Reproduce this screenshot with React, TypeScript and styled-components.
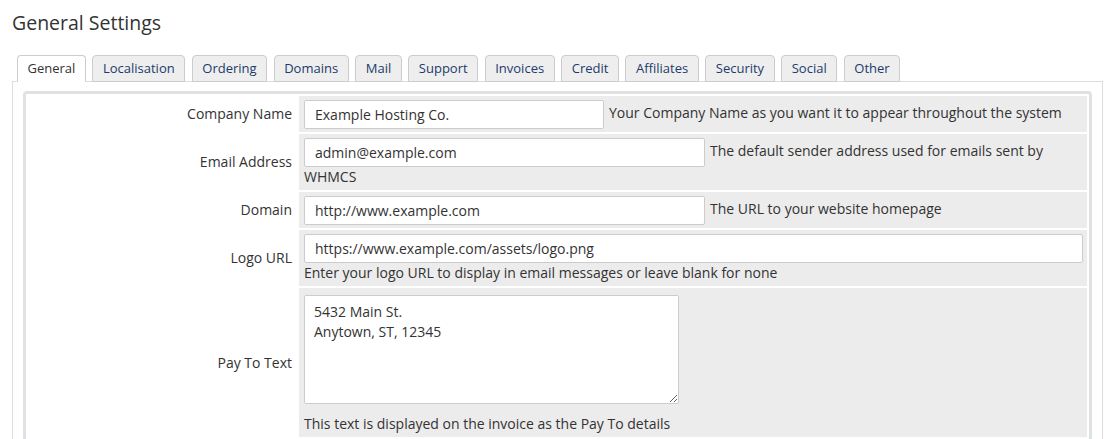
import React from "react";
import styled, { createGlobalStyle } from "styled-components";

type Field = {
  label: string;
  value: string;
  width?: number;
  help: string;
  kind?: "inline" | "block" | "textarea";
};

const tabs = [
  "General",
  "Localisation",
  "Ordering",
  "Domains",
  "Mail",
  "Support",
  "Invoices",
  "Credit",
  "Affiliates",
  "Security",
  "Social",
  "Other",
];

const fields: Field[] = [
  {
    label: "Company Name",
    value: "Example Hosting Co.",
    width: 300,
    help: "Your Company Name as you want it to appear throughout the system",
  },
  {
    label: "Email Address",
    value: "admin@example.com",
    width: 401,
    help: "The default sender address used for emails sent by WHMCS",
  },
  {
    label: "Domain",
    value: "http://www.example.com",
    width: 401,
    help: "The URL to your website homepage",
  },
  {
    label: "Logo URL",
    value: "https://www.example.com/assets/logo.png",
    help: "Enter your logo URL to display in email messages or leave blank for none",
    kind: "block",
  },
  {
    label: "Pay To Text",
    value: "5432 Main St.\nAnytown, ST, 12345",
    help: "This text is displayed on the invoice as the Pay To details",
    kind: "textarea",
  },
];

// #region Styled components

const GlobalStyle = createGlobalStyle`
  * { box-sizing: border-box; }
  body {
    margin: 0;
    background: #fff;
    color: #333;
    font-family: "Open Sans", "Liberation Sans", sans-serif;
  }
`;

const Page = styled.div`
  padding: 0 14px 0 12px;
`;

const Title = styled.h1`
  margin: 0 0 20px;
  padding-top: 11px;
  font-size: 19.5px;
  font-weight: 400;
  line-height: 24px;
  color: #333;
`;

const TabList = styled.div`
  display: flex;
  gap: 6.6px;
  padding-left: 5px;
`;

const Tab = styled.div<{ $active?: boolean }>`
  position: relative;
  z-index: 1;
  margin-bottom: -1px;
  padding: 3px 9.5px;
  font-size: 13px;
  line-height: 19px;
  border: 1px solid #ccc;
  border-bottom-color: ${(p) => (p.$active ? "#fff" : "#ccc")};
  border-radius: 4px 4px 0 0;
  background: ${(p) => (p.$active ? "#fff" : "#eee")};
  color: ${(p) => (p.$active ? "#333" : "#1d3a6c")};
`;

const Panel = styled.div`
  border: 1px solid #ddd;
  padding: 9px 10px 10px;
`;

const SettingsTable = styled.table`
  width: 100%;
  table-layout: fixed;
  border: 3px solid #dee2e4;
  border-radius: 4px;
  border-collapse: separate;
  border-spacing: 2px;
  font-size: 14px;
  line-height: 20px;
`;

const LabelCell = styled.td`
  width: 269px;
  padding: 0 5px;
  text-align: right;
  vertical-align: middle;
  background: #fff;
`;

const FieldCell = styled.td`
  padding: 3px 4px 3px 5px;
  vertical-align: middle;
  background: #ececec;
`;

const TextInput = styled.input<{ $width?: number; $block?: boolean }>`
  display: ${(p) => (p.$block ? "block" : "inline-block")};
  width: ${(p) => (p.$width ? `${p.$width}px` : "100%")};
  height: 29px;
  margin: 1px 5px 0 0;
  padding: 0 10px;
  border: 1px solid #ccc;
  border-radius: 2px;
  background: #fff;
  color: #333;
  font: 14px "Open Sans", "Liberation Sans", sans-serif;
  vertical-align: middle;
`;

const TextArea = styled.textarea`
  display: block;
  width: 375px;
  height: 109px;
  margin: 4px 0 10px;
  padding: 6px 9px;
  border: 1px solid #ccc;
  border-radius: 2px;
  color: #333;
  font: 14px/20px "Open Sans", "Liberation Sans", sans-serif;
`;

// #endregion

const renderField = (f: Field) => {
  if (f.kind === "textarea") {
    return (
      <>
        <TextArea defaultValue={f.value} />
        {f.help}
      </>
    );
  }
  if (f.kind === "block") {
    return (
      <>
        <TextInput $block defaultValue={f.value} />
        {f.help}
      </>
    );
  }
  return (
    <>
      <TextInput $width={f.width} defaultValue={f.value} />
      {f.help}
    </>
  );
};

const App = () => {
  return (
    <Page>
      <GlobalStyle />
      <Title>General Settings</Title>
      <TabList>
        {tabs.map((t) => (
          <Tab key={t} $active={t === "General"}>
            {t}
          </Tab>
        ))}
      </TabList>
      <Panel>
        <SettingsTable>
          <tbody>
            {fields.map((f) => (
              <tr key={f.label}>
                <LabelCell>{f.label}</LabelCell>
                <FieldCell>{renderField(f)}</FieldCell>
              </tr>
            ))}
          </tbody>
        </SettingsTable>
      </Panel>
    </Page>
  );
};

export default App;
